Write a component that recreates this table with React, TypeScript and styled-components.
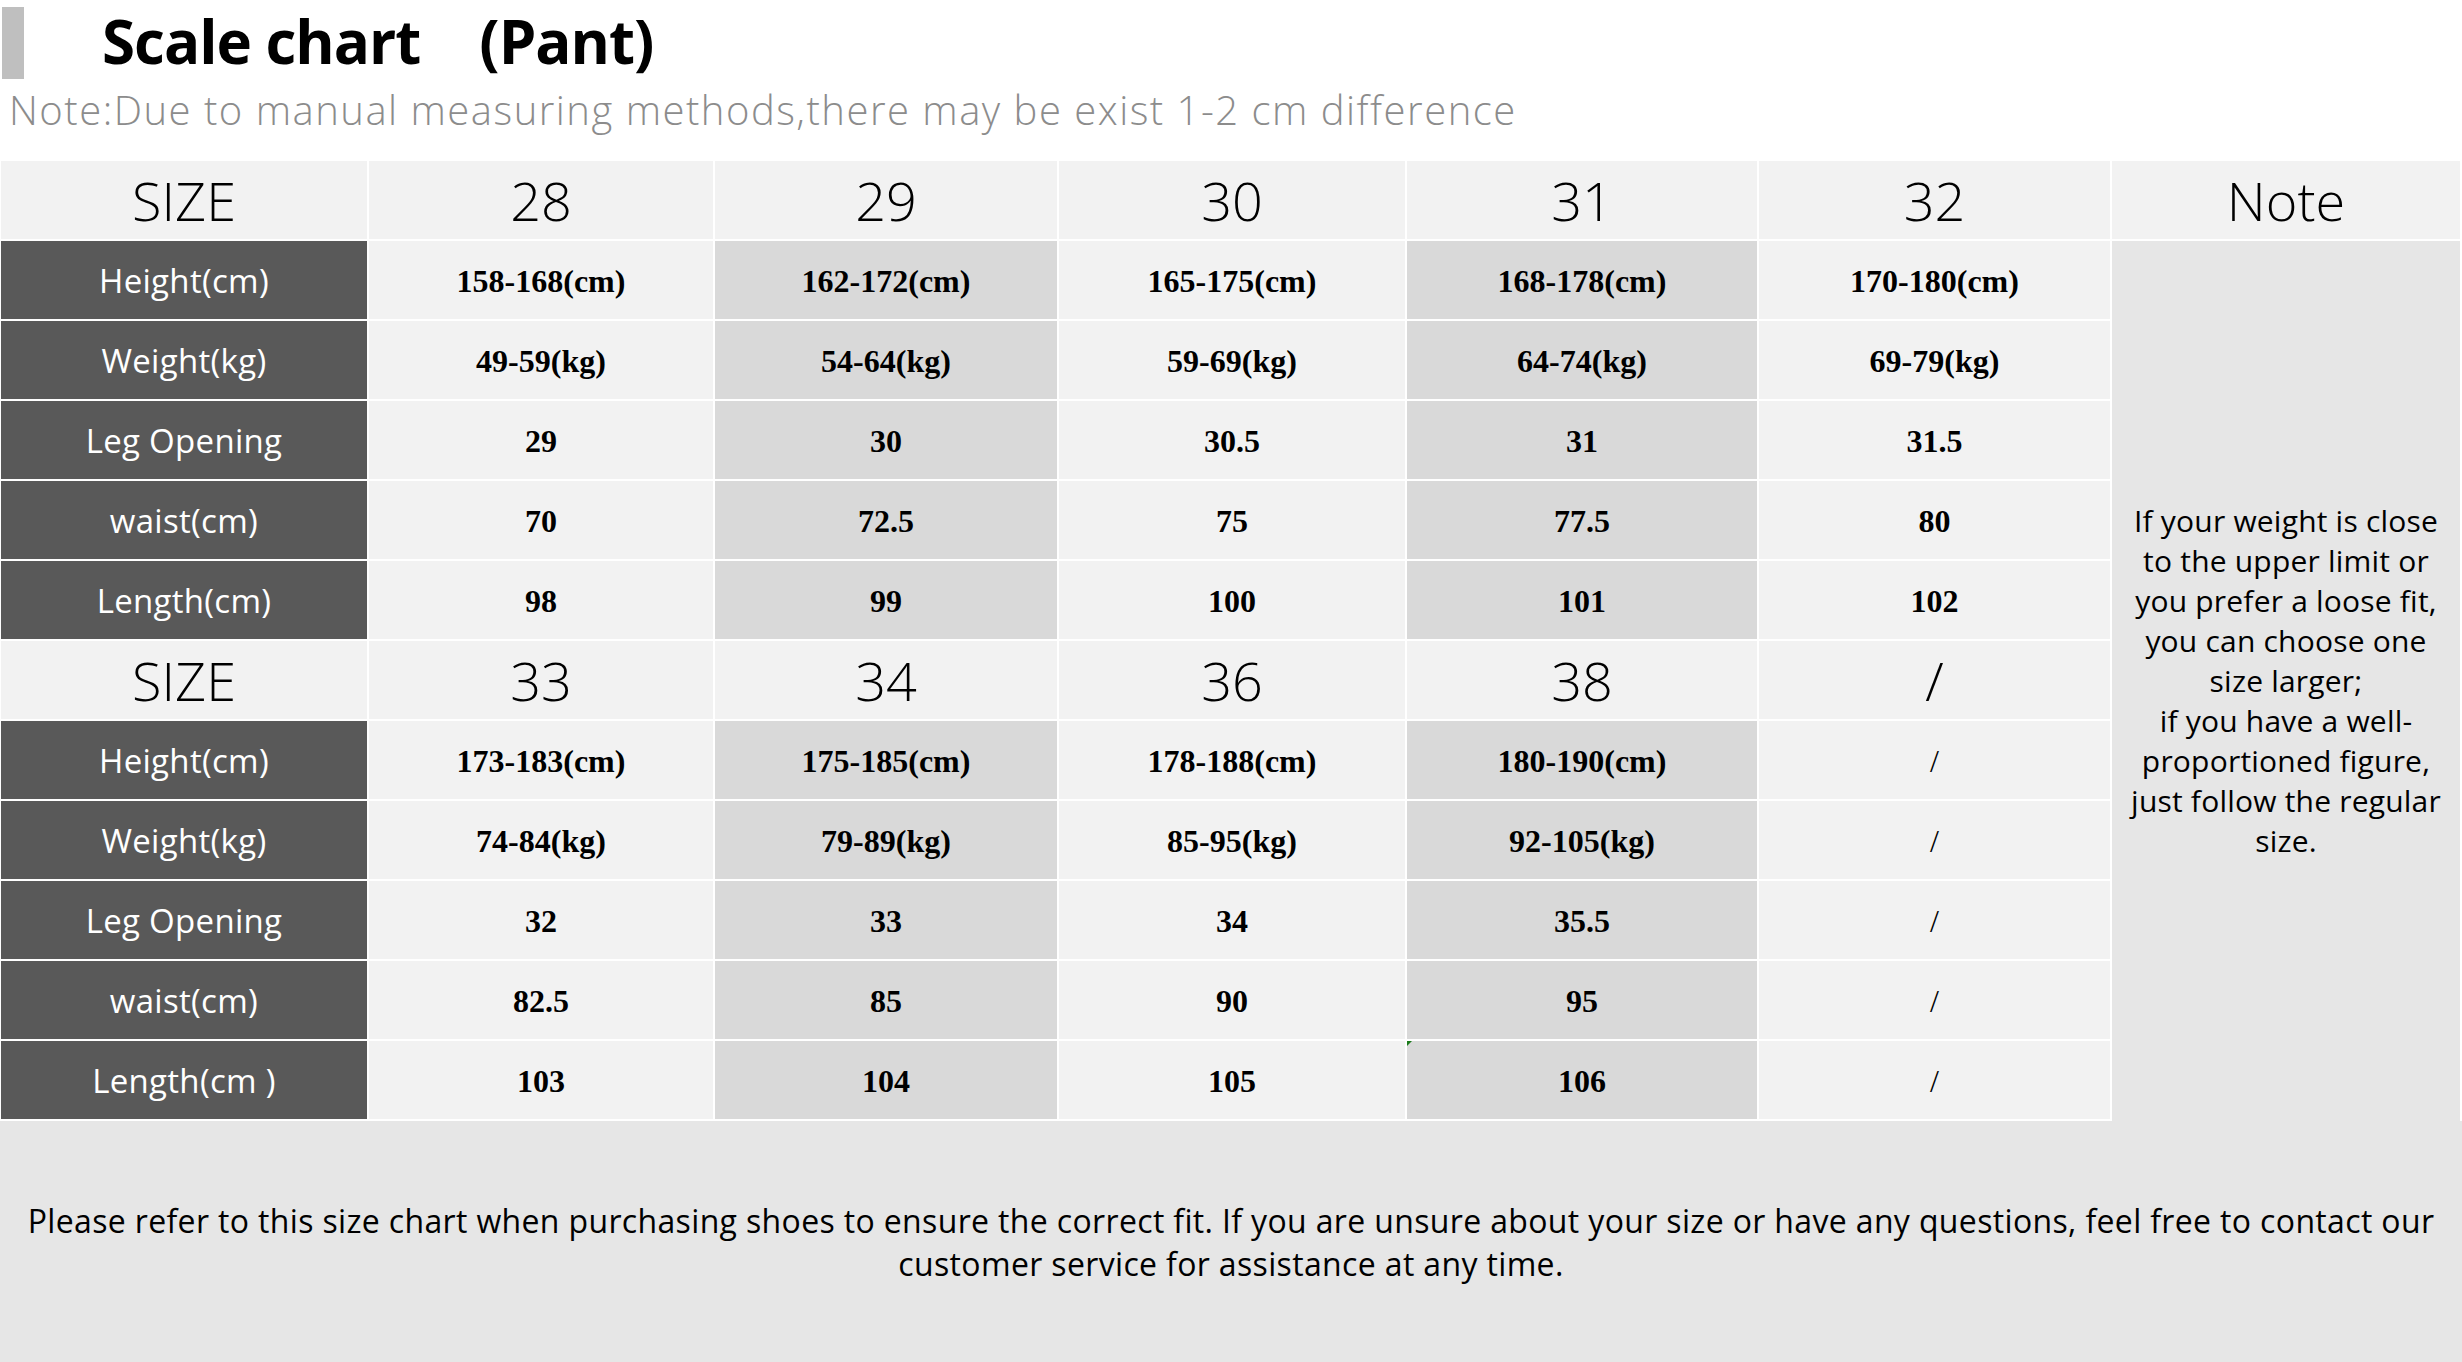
import React from 'react';
import styled, { createGlobalStyle } from 'styled-components';

const colors = {
  light: '#f2f2f2',
  shade: '#d9d9d9',
  label: '#595959',
  note: '#e6e6e6',
  bar: '#bfbfbf',
  hint: '#8c8c8c',
};

const sans = `'Open Sans', 'Noto Sans', sans-serif`;
const serif = `'Liberation Serif', 'Times New Roman', serif`;

interface Block {
  sizes: string[];
  rows: { label: string; values: string[] }[];
}

const blocks: Block[] = [
  {
    sizes: ['28', '29', '30', '31', '32'],
    rows: [
      { label: 'Height(cm)', values: ['158-168(cm)', '162-172(cm)', '165-175(cm)', '168-178(cm)', '170-180(cm)'] },
      { label: 'Weight(kg)', values: ['49-59(kg)', '54-64(kg)', '59-69(kg)', '64-74(kg)', '69-79(kg)'] },
      { label: 'Leg Opening', values: ['29', '30', '30.5', '31', '31.5'] },
      { label: 'waist(cm)', values: ['70', '72.5', '75', '77.5', '80'] },
      { label: 'Length(cm)', values: ['98', '99', '100', '101', '102'] },
    ],
  },
  {
    sizes: ['33', '34', '36', '38', '/'],
    rows: [
      { label: 'Height(cm)', values: ['173-183(cm)', '175-185(cm)', '178-188(cm)', '180-190(cm)', '/'] },
      { label: 'Weight(kg)', values: ['74-84(kg)', '79-89(kg)', '85-95(kg)', '92-105(kg)', '/'] },
      { label: 'Leg Opening', values: ['32', '33', '34', '35.5', '/'] },
      { label: 'waist(cm)', values: ['82.5', '85', '90', '95', '/'] },
      { label: 'Length(cm )', values: ['103', '104', '105', '106', '/'] },
    ],
  },
];

const noteLines = [
  'If your weight is close',
  'to the upper limit or',
  'you prefer a loose fit,',
  'you can choose one',
  'size larger;',
  'if you have a well-',
  'proportioned figure,',
  'just follow the regular',
  'size.',
];

const App = () => {
  return (
    <Page>
      <GlobalStyle />
      <Header>
        <TitleRow>
          <Marker />
          <Title>Scale chart　(Pant)</Title>
        </TitleRow>
        <Hint>Note:Due to manual measuring methods,there may be exist 1-2 cm difference</Hint>
      </Header>

      <Chart>
        {blocks.map((block, b) => (
          <React.Fragment key={b}>
            <HeadCell>SIZE</HeadCell>
            {block.sizes.map(s => (
              <HeadCell key={s}>{s}</HeadCell>
            ))}
            {b === 0 && <HeadCell>Note</HeadCell>}
            {block.rows.map(row => (
              <React.Fragment key={row.label}>
                <LabelCell>{row.label}</LabelCell>
                {row.values.map((v, i) => (
                  <ValueCell
                    key={i}
                    shaded={i % 2 === 1}
                    thin={v === '/'}
                    marked={b === 1 && row.label.startsWith('Length') && i === 3}
                  >
                    {v}
                  </ValueCell>
                ))}
              </React.Fragment>
            ))}
          </React.Fragment>
        ))}
        <NoteCell>
          {noteLines.map(line => (
            <span key={line}>{line}</span>
          ))}
        </NoteCell>
      </Chart>

      <Footer>
        <span>
          Please refer to this size chart when purchasing shoes to ensure the correct fit. If you are unsure about
          your size or have any questions, feel free to contact our
        </span>
        <span>customer service for assistance at any time.</span>
      </Footer>
    </Page>
  );
};

const GlobalStyle = createGlobalStyle`
  html, body {
    margin: 0;
    padding: 0;
    background: #ffffff;
  }
`;

const Page = styled.div`
  width: 2462px;
  height: 1362px;
  display: flex;
  flex-direction: column;
  overflow: hidden;
  background: #ffffff;
`;

const Header = styled.div`
  height: 161px;
  display: flex;
  flex-direction: column;
`;

const TitleRow = styled.div`
  display: flex;
  align-items: flex-start;
  height: 84px;
  padding-top: 7px;
  box-sizing: border-box;
`;

const Marker = styled.div`
  width: 22px;
  height: 72px;
  margin-left: 2px;
  background: ${colors.bar};
`;

const Title = styled.h1`
  margin: -6px 0 0 78px;
  font-family: ${sans};
  font-weight: 700;
  font-size: 60px;
  line-height: 80px;
  letter-spacing: -1px;
  color: #000000;
  white-space: nowrap;
`;

const Hint = styled.div`
  margin-left: 9px;
  font-family: ${sans};
  font-weight: 300;
  font-size: 40px;
  line-height: 52px;
  letter-spacing: 1.5px;
  color: ${colors.hint};
  white-space: nowrap;
`;

const Chart = styled.div`
  display: grid;
  grid-template-columns: 366px 344px 342px 346px 350px 351px 348px;
  grid-auto-rows: 78px;
  gap: 2px;
  padding: 0 0 2px 1px;
  background: #ffffff;
`;

const Cell = styled.div`
  display: flex;
  align-items: center;
  justify-content: center;
  white-space: nowrap;
`;

const HeadCell = styled(Cell)`
  background: ${colors.light};
  font-family: ${sans};
  font-weight: 300;
  font-size: 54px;
  color: #000000;
`;

const LabelCell = styled(Cell)`
  background: ${colors.label};
  font-family: ${sans};
  font-size: 33px;
  letter-spacing: 0.3px;
  color: #ffffff;
`;

const ValueCell = styled(Cell)<{ shaded: boolean; thin: boolean; marked: boolean }>`
  position: relative;
  padding-top: 2px;
  background: ${p => (p.shaded ? colors.shade : colors.light)};
  font-family: ${serif};
  font-weight: ${p => (p.thin ? 400 : 700)};
  font-size: 32px;
  color: #000000;

  ${p =>
    p.marked &&
    `
    &::before {
      content: '';
      position: absolute;
      top: 0;
      left: 0;
      border-top: 5px solid #1a7a1a;
      border-right: 5px solid transparent;
    }
  `}
`;

const NoteCell = styled.div`
  grid-column: 7;
  grid-row: 2 / 13;
  margin-bottom: -2px;
  background: ${colors.note};
  display: flex;
  flex-direction: column;
  align-items: center;
  justify-content: center;
  font-family: ${sans};
  font-size: 30px;
  line-height: 40px;
  letter-spacing: 0.2px;
  color: #000000;
  white-space: nowrap;
`;

const Footer = styled.div`
  flex: 1;
  background: ${colors.note};
  display: flex;
  flex-direction: column;
  align-items: center;
  justify-content: center;
  font-family: ${sans};
  font-size: 32px;
  line-height: 43px;
  letter-spacing: 0.35px;
  color: #000000;
  white-space: nowrap;
`;

export default App;
